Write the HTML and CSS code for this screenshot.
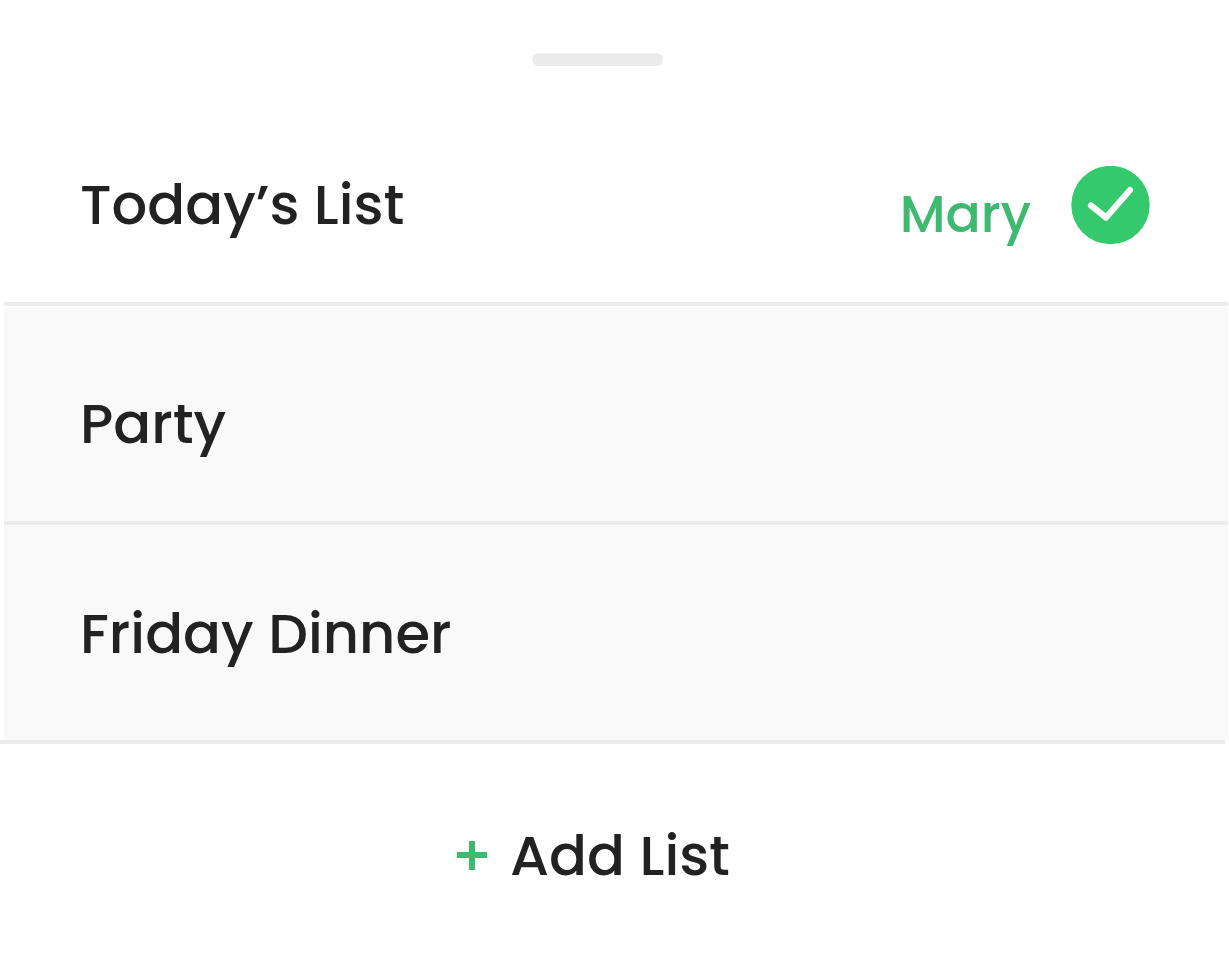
FILE: index.html
```html
<!DOCTYPE html>
<html lang="en">
<head>
<meta charset="utf-8">
<meta name="viewport" content="width=device-width, initial-scale=1">
<title>Lists</title>
<link rel="stylesheet" href="styles.css">
</head>
<body>
<main class="sheet">
  <div class="grip"><span class="grip-bar"></span></div>
  <ul class="lists">
    <li class="list list-active">
      <span class="name">Today’s List</span>
      <span class="owner">Mary</span>
      <svg class="check" viewBox="0 0 79 79" role="img" aria-label="Selected">
        <circle cx="39.500" cy="39" r="39.200" fill="#34c96c"/>
        <path d="M20 39.500 L35 51.500 L59 24" fill="none" stroke="#fff" stroke-width="6.200" stroke-linecap="round" stroke-linejoin="round"/>
      </svg>
    </li>
    <li class="list list-muted"><span class="name">Party</span></li>
    <li class="list list-muted list-last"><span class="name">Friday Dinner</span></li>
  </ul>
  <div class="divider"></div>
  <button class="add" type="button">
    <svg class="plus" viewBox="0 0 30 30" aria-hidden="true"><path d="M15 0V29M0 14H30" stroke="#3dba70" stroke-width="6"/></svg>
    <span class="add-label">Add List</span>
  </button>
</main>
</body>
</html>
```
FILE: styles.css
```css
* { box-sizing: border-box; }
body { margin: 0; background: #fff; color: #222; font-family: Poppins, Lato, sans-serif; font-weight: 500; }
.sheet { display: flex; flex-direction: column; min-height: 100vh; }
.grip { display: flex; justify-content: center; padding: 53px 34px 41px 0; }
.grip-bar { width: 131px; height: 13px; border-radius: 7px; background: #ebebeb; }
.lists { list-style: none; margin: 0 1px 0 4px; padding: 0; }
.list { display: flex; align-items: center; padding: 0 78px 0 76px; border-bottom: 4px solid #ebebeb; font-size: 56px; line-height: 72px; }
.list-active { min-height: 199px; padding-top: 2px; }
.list-active .name { padding-bottom: 2px; }
.list-muted { min-height: 218px; background: #f9f9f9; padding-top: 20px; }
.list-active + .list-muted { margin-top: 1px; }
.list-last { min-height: 215px; border-bottom: 0; padding-top: 2px; }
.divider { height: 4px; margin-right: 4px; background: #ebebeb; }
.owner { margin-left: auto; margin-right: 40px; padding-top: 16px; color: #3dba70; font-size: 52px; }
.check { width: 79px; height: 79px; flex: none; }
.add { display: flex; align-items: center; align-self: center; gap: 23px; margin: 76px 42px 0 0; padding: 0; border: 0; background: none; color: inherit; font: inherit; font-size: 56px; line-height: 72px; cursor: pointer; }
.plus { width: 30px; height: 30px; }
```
